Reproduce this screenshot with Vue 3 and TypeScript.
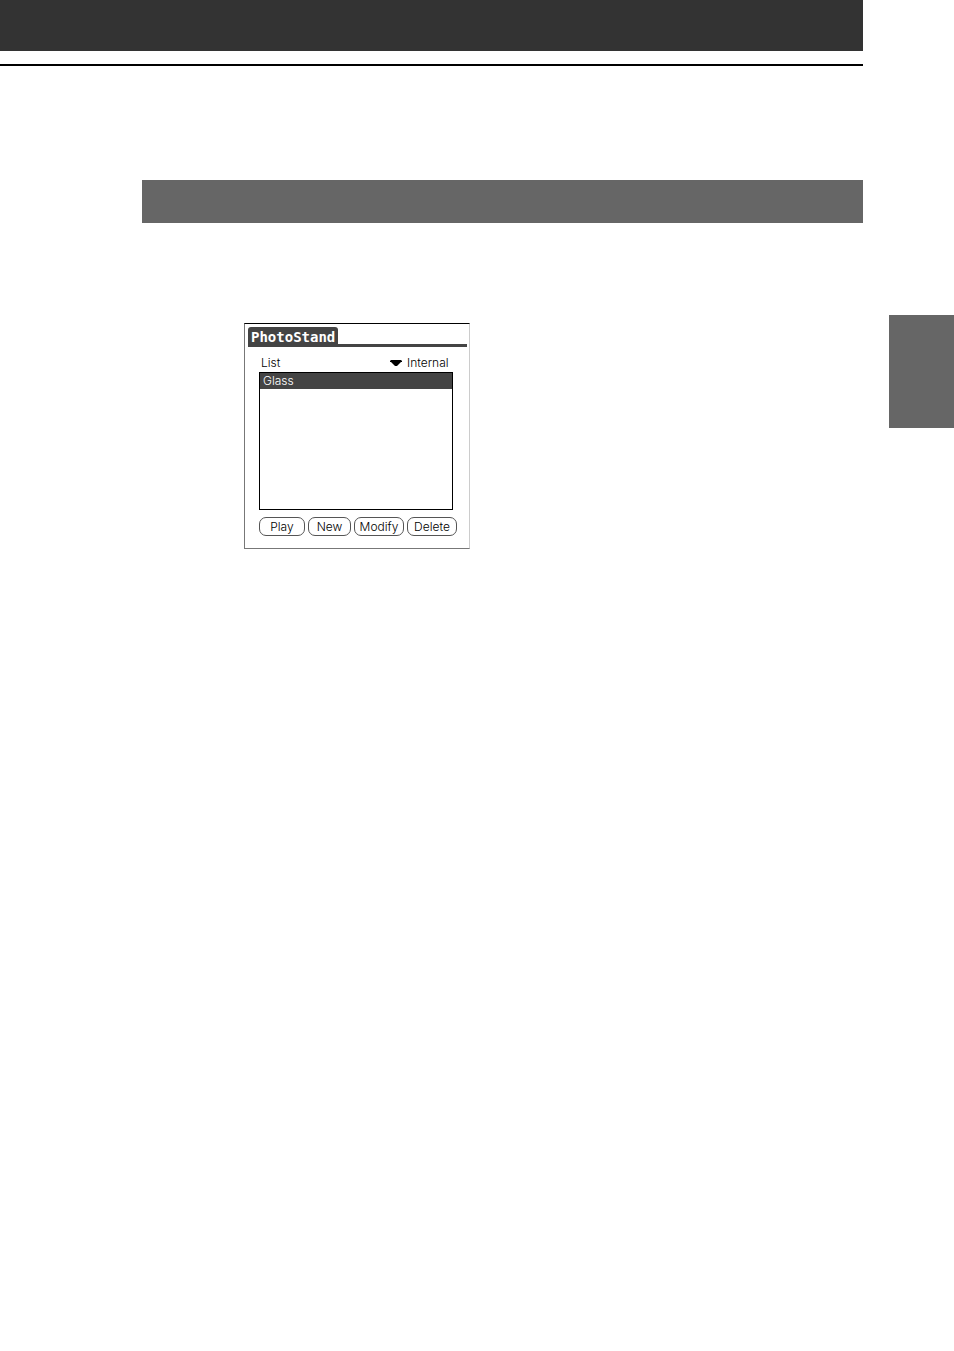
<script setup lang="ts">
import { ref } from 'vue'

const places = ['Internal']
const place = ref('Internal')
const albums = ['Glass']
const selected = ref('Glass')
const actions = ['Play', 'New', 'Modify', 'Delete']
</script>

<template>
  <div class="page">
    <main class="content">
      <header class="banner"></header>
      <div class="rule"></div>
      <div class="section-bar"></div>
      <section class="device">
        <div class="title-row">
          <h1 class="title">PhotoStand</h1>
        </div>
        <div class="list-head">
          <label for="place">List</label>
          <div class="picker">
            <svg class="arrow" viewBox="0 0 12 6" aria-hidden="true">
              <path d="M1 0H11L12 1V2H11L7 6H5L1 2H0V1Z" fill="#000" />
            </svg>
            <select id="place" v-model="place">
              <option v-for="p in places" :key="p">{{ p }}</option>
            </select>
          </div>
        </div>
        <ul class="albums">
          <li v-for="a in albums" :key="a">
            <button type="button" class="album" :class="{ chosen: a === selected }" @click="selected = a">{{ a }}</button>
          </li>
        </ul>
        <div class="actions">
          <button v-for="a in actions" :key="a" type="button" class="action" :class="a.toLowerCase()">{{ a }}</button>
        </div>
      </section>
    </main>
    <aside class="side">
      <div class="thumb-tab"></div>
    </aside>
  </div>
</template>

<style>
body {
  margin: 0;
  background: #fff;
}
</style>

<style scoped>
.page {
  display: grid;
  grid-template-columns: 1fr 91px;
  min-height: 100vh;
  font: 12px/16px Inter, "Liberation Sans", sans-serif;
  font-weight: 300;
  color: #000;
}
.content {
  min-width: 0;
}
.banner {
  height: 51px;
  background: #333;
}
.rule {
  height: 2px;
  margin-top: 13px;
  background: #000;
}
.section-bar {
  height: 43px;
  margin: 114px 0 0 142px;
  background: #666;
}
.device {
  box-sizing: border-box;
  width: 226px;
  margin: 100px 0 0 244px;
  padding: 3px 2px 12px 3px;
  border: 1px solid #777;
  border-top-color: #000;
  border-right-color: #ccc;
}
.title-row {
  display: flex;
  border-bottom: 3px solid #444;
}
.title {
  margin: 0;
  padding: 3px 3px 0;
  border-radius: 3px 3px 0 0;
  background: #444;
  color: #fff;
  font: bold 14px/14px "DejaVu Sans Mono", monospace;
}
.list-head {
  display: flex;
  justify-content: space-between;
  margin: 8px 18px 1px 13px;
}
.picker {
  display: flex;
  align-items: center;
  gap: 5px;
}
.arrow {
  width: 12px;
  height: 6px;
}
select {
  appearance: none;
  height: 16px;
  padding: 0;
  border: 0;
  background: none;
  color: inherit;
  font: inherit;
}
.albums {
  box-sizing: border-box;
  height: 138px;
  margin: 0 14px 0 11px;
  padding: 0;
  border: 1px solid #000;
  list-style: none;
}
.album {
  display: block;
  width: 100%;
  height: 16px;
  padding: 0 3px;
  border: 0;
  background: none;
  color: inherit;
  font: inherit;
  text-align: left;
}
.chosen {
  background: #444;
  color: #fff;
}
.actions {
  display: flex;
  justify-content: space-between;
  margin: 7px 10px 0 11px;
}
.action {
  height: 19px;
  padding: 0;
  border: 1px solid #555;
  border-radius: 7px;
  background: #fff;
  color: inherit;
  font: inherit;
}
.play {
  width: 46px;
}
.new {
  width: 43px;
}
.modify,
.delete {
  width: 50px;
}
.thumb-tab {
  height: 113px;
  margin: 315px 0 0 26px;
  background: #666;
}
</style>
